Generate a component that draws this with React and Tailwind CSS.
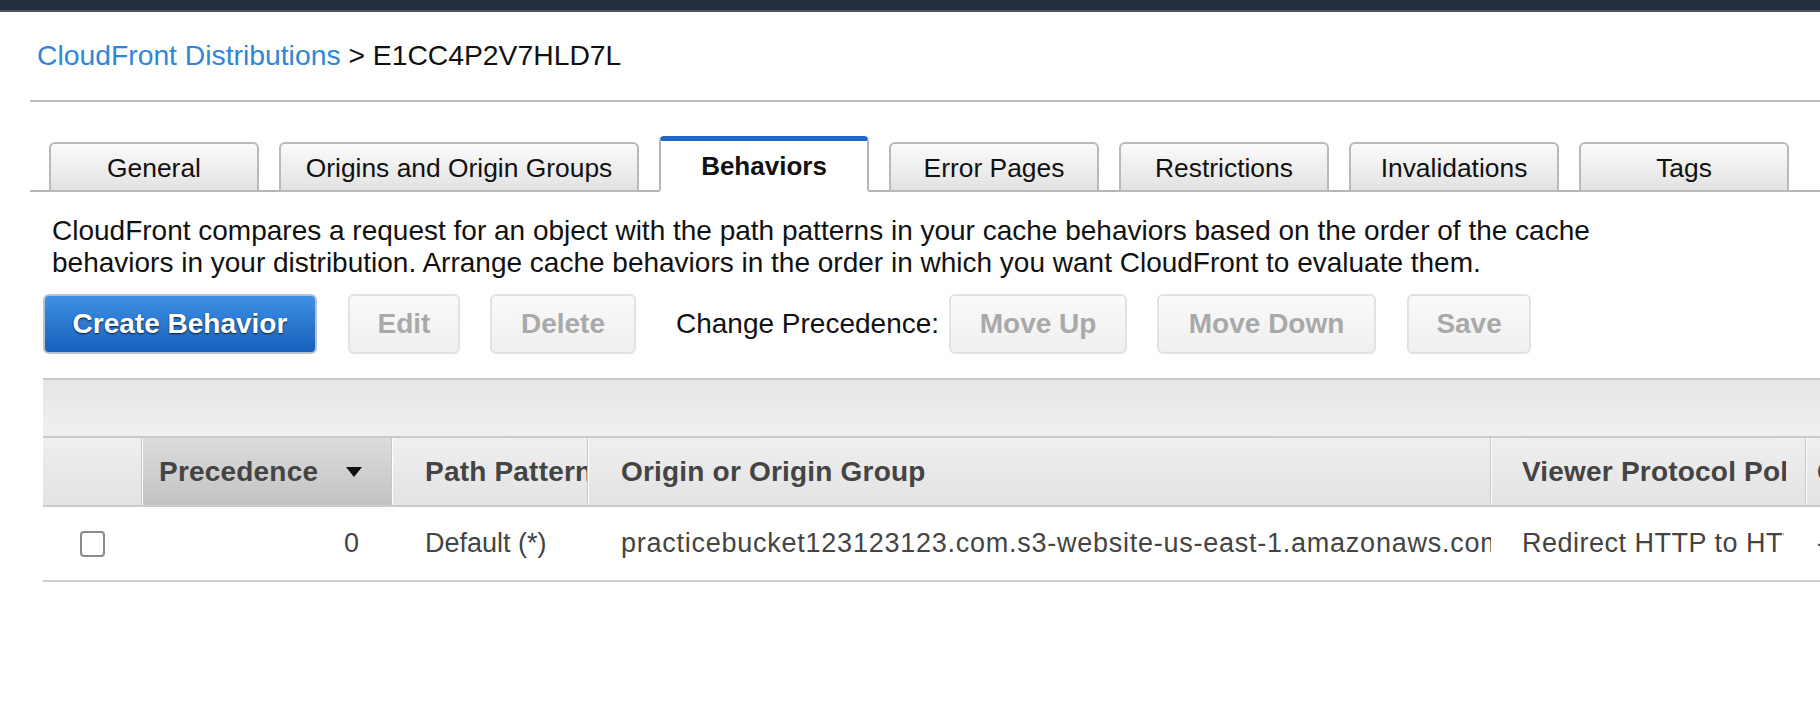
import React from "react";

const tabs = [
  { label: "General", w: "w-[210px]" },
  { label: "Origins and Origin Groups", w: "w-[360px]" },
  { label: "Behaviors", w: "w-[210px]", active: true },
  { label: "Error Pages", w: "w-[210px]" },
  { label: "Restrictions", w: "w-[210px]" },
  { label: "Invalidations", w: "w-[210px]" },
  { label: "Tags", w: "w-[210px]" },
];

function Tab({ label, w, active }) {
  if (active) {
    return (
      <div
        className={`${w} h-[56px] -mb-[2px] flex items-center justify-center bg-white border-x-2 border-t-[5px] border-b-2 border-x-[#b5b5b5] border-t-[#1f66c6] border-b-white rounded-t-[5px] text-[26px] font-bold text-[#111] pt-[1px]`}
      >
        {label}
      </div>
    );
  }
  return (
    <div
      className={`${w} h-[50px] -mb-[2px] flex items-center justify-center bg-gradient-to-b from-[#fbfbfb] to-[#e2e2e2] border-2 border-[#b9b9b9] rounded-t-[6px] text-[26.4px] text-[#111] pt-[4px]`}
    >
      {label}
    </div>
  );
}

function DisabledButton({ children, w }) {
  return (
    <div
      className={`${w} h-[60px] flex items-center justify-center rounded-[6px] border-2 border-[#e2e2e2] bg-gradient-to-b from-[#fafafa] to-[#efefef] text-[28px] font-bold text-[#a9a9a9]`}
    >
      {children}
    </div>
  );
}

export default function App() {
  return (
    <div className="w-[1820px] h-[712px] overflow-hidden bg-white font-['Liberation_Sans',Arial,sans-serif]">
      <div className="h-[10px] bg-[#232f3e]" />
      <div className="h-[2px] bg-[#4a5462]" />

      <div className="pl-[37px] mt-[27px] h-[32px] leading-[32px] text-[28.3px] whitespace-nowrap">
        <span className="text-[#2f86d9]">CloudFront Distributions</span>
        <span className="text-[#111]"> &gt; E1CC4P2V7HLD7L</span>
      </div>

      <div className="ml-[30px] mt-[29px] h-[2px] bg-[#bcbcbc]" />

      <div className="ml-[30px] mt-[34px] pl-[19px] flex items-end gap-[20px] border-b-2 border-[#b5b5b5]">
        {tabs.map((t) => (
          <Tab key={t.label} {...t} />
        ))}
      </div>

      <p className="pl-[52px] mt-[23px] text-[28px] leading-[32px] text-[#111] whitespace-nowrap">
        CloudFront compares a request for an object with the path patterns in your cache behaviors based on the order of the cache
        <br />
        behaviors in your distribution. Arrange cache behaviors in the order in which you want CloudFront to evaluate them.
      </p>

      <div className="pl-[43px] mt-[15px] flex items-center">
        <div className="w-[274px] h-[60px] flex items-center justify-center rounded-[6px] border-2 border-[#b8c2cc] bg-gradient-to-b from-[#3f91e6] to-[#1760bb] text-[28px] font-bold text-white [text-shadow:0_1px_2px_rgba(0,0,0,0.75)]">
          Create Behavior
        </div>
        <div className="ml-[31px]">
          <DisabledButton w="w-[112px]">Edit</DisabledButton>
        </div>
        <div className="ml-[30px]">
          <DisabledButton w="w-[146px]">Delete</DisabledButton>
        </div>
        <span className="ml-[40px] text-[28px] text-[#111] whitespace-nowrap">Change Precedence:</span>
        <div className="ml-[10px]">
          <DisabledButton w="w-[178px]">Move Up</DisabledButton>
        </div>
        <div className="ml-[30px]">
          <DisabledButton w="w-[219px]">Move Down</DisabledButton>
        </div>
        <div className="ml-[31px]">
          <DisabledButton w="w-[124px]">Save</DisabledButton>
        </div>
      </div>

      <div className="ml-[43px] mt-[24px]">
        <div className="h-[58px] border-t-2 border-[#c9c9c9] bg-gradient-to-b from-[#e6e6e6] to-[#f0f0f0]" />
        <div className="flex h-[71px] border-t-2 border-b-2 border-[#cacaca] bg-gradient-to-b from-[#efefef] to-[#e3e3e3] text-[28px] font-bold text-[#444] whitespace-nowrap tracking-[0.2px]">
          <div className="w-[99px] shrink-0 border-r border-[#c6c6c6]" />
          <div className="w-[250px] shrink-0 flex items-center pl-[16px] bg-gradient-to-b from-[#dcdcdc] to-[#c3c3c3] border-l border-white border-r border-r-[#c6c6c6]">
            <span>Precedence</span>
            <svg className="ml-[28px]" width="16" height="10" viewBox="0 0 16 10">
              <path d="M0 0 H16 L8 10 Z" fill="#111" />
            </svg>
          </div>
          <div className="w-[196px] shrink-0 flex items-center pl-[32px] overflow-hidden border-l border-white border-r border-r-[#c6c6c6]">
            <span>Path Pattern</span>
          </div>
          <div className="w-[903px] shrink-0 flex items-center pl-[32px] overflow-hidden border-l border-white border-r border-r-[#c6c6c6]">
            <span>Origin or Origin Group</span>
          </div>
          <div className="w-[315px] shrink-0 flex items-center pl-[30px] border-l border-white border-r border-r-[#c6c6c6]">
            <span className="block w-[264px] overflow-hidden">Viewer Protocol Policy</span>
          </div>
          <div className="w-[200px] shrink-0 flex items-center pl-[10px] border-l border-white">
            <span>Compress</span>
          </div>
        </div>
        <div className="flex h-[75px] border-b-2 border-[#cfcfcf] text-[27px] text-[#444] whitespace-nowrap">
          <div className="w-[99px] shrink-0 flex items-center justify-center">
            <div className="w-[25px] h-[26px] rounded-[4px] border-2 border-[#8a8a8a] bg-white" />
          </div>
          <div className="w-[250px] shrink-0 flex items-center justify-end pr-[33px]">0</div>
          <div className="w-[196px] shrink-0 flex items-center pl-[33px] overflow-hidden">Default (*)</div>
          <div className="w-[903px] shrink-0 flex items-center pl-[33px] overflow-hidden tracking-[0.75px]">
            practicebucket123123123.com.s3-website-us-east-1.amazonaws.com
          </div>
          <div className="w-[315px] shrink-0 flex items-center pl-[31px]">
            <span className="block w-[262px] overflow-hidden tracking-[0.5px]">Redirect HTTP to HTTPS</span>
          </div>
          <div className="w-[200px] shrink-0 flex items-center pl-[11px]">-</div>
        </div>
      </div>
    </div>
  );
}
